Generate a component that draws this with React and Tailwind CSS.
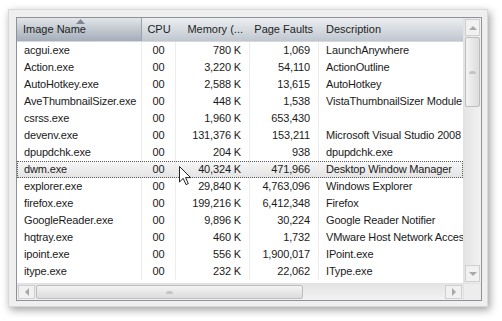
const rows = [
  ['acgui.exe', '00', '780 K', '1,069', 'LaunchAnywhere'],
  ['Action.exe', '00', '3,220 K', '54,110', 'ActionOutline'],
  ['AutoHotkey.exe', '00', '2,588 K', '13,615', 'AutoHotkey'],
  ['AveThumbnailSizer.exe', '00', '448 K', '1,538', 'VistaThumbnailSizer Module'],
  ['csrss.exe', '00', '1,960 K', '653,430', ''],
  ['devenv.exe', '00', '131,376 K', '153,211', 'Microsoft Visual Studio 2008'],
  ['dpupdchk.exe', '00', '204 K', '938', 'dpupdchk.exe'],
  ['dwm.exe', '00', '40,324 K', '471,966', 'Desktop Window Manager'],
  ['explorer.exe', '00', '29,840 K', '4,763,096', 'Windows Explorer'],
  ['firefox.exe', '00', '199,216 K', '6,412,348', 'Firefox'],
  ['GoogleReader.exe', '00', '9,896 K', '30,224', 'Google Reader Notifier'],
  ['hqtray.exe', '00', '460 K', '1,732', 'VMware Host Network Access'],
  ['ipoint.exe', '00', '556 K', '1,900,017', 'IPoint.exe'],
  ['itype.exe', '00', '232 K', '22,062', 'IType.exe'],
]

function Arrow({ dir }) {
  const pts = {
    up: '0,4 4,0 8,4',
    down: '0,0 8,0 4,4',
    left: '4,0 4,8 0,4',
    right: '0,0 0,8 4,4',
  }[dir]
  const vertical = dir === 'up' || dir === 'down'
  return (
    <svg width={vertical ? 8 : 4} height={vertical ? 4 : 8} viewBox={vertical ? '0 0 8 4' : '0 0 4 8'}>
      <polygon points={pts} fill="#a8a8a8" />
    </svg>
  )
}

function Row({ r, selected }) {
  return (
    <div
      className={
        'flex h-[17px] items-center text-[#1a1a1a] tracking-[-0.15px] ' +
        (selected
          ? 'bg-[linear-gradient(#f7f7f7,#e3e3e3)] outline outline-1 outline-dotted outline-[#5a5a5a] -outline-offset-1'
          : '')
      }
    >
      <div className="w-[125px] shrink-0 pl-[7px] truncate border-r border-[#ececec] h-full leading-[17px]">{r[0]}</div>
      <div className="w-[34px] shrink-0 text-center border-r border-[#ececec] h-full leading-[17px]">{r[1]}</div>
      <div className="w-[74px] shrink-0 text-right pr-[8px] border-r border-[#ececec] h-full leading-[17px]">{r[2]}</div>
      <div className="w-[69px] shrink-0 text-right pr-[8px] border-r border-[#ececec] h-full leading-[17px]">{r[3]}</div>
      <div className="w-[200px] shrink-0 pl-[7px] whitespace-nowrap h-full leading-[17px]">{r[4]}</div>
    </div>
  )
}

export default function App() {
  return (
    <div className="relative w-[502px] h-[321px] bg-white pt-[9px] pl-[8px] font-['Liberation_Sans',Arial,sans-serif] text-[11px]">
      <div className="w-[480px] h-[298px] bg-[#efefef] border border-[#d8d8d8] shadow-[2px_3px_8px_rgba(0,0,0,0.38)] pt-[7px] pl-[7px]">
        {/* list view */}
        <div className="w-[466px] h-[284px] border border-[#8e9196] bg-white flex flex-col">
          <div className="flex h-[265px]">
            <div className="w-[446px] overflow-hidden flex flex-col">
              {/* header */}
              <div className="flex h-[24px] shrink-0 text-[#1e1e1e] border-b border-[#d5d9de]">
                <div className="relative w-[125px] shrink-0 pl-[6px] flex items-center bg-[linear-gradient(#e2e6ea,#c1c8d0_50%,#a4aeb9)] border-r border-[#9aa3ad]">
                  <svg className="absolute left-[59px] top-[1px]" width="9" height="5" viewBox="0 0 9 5">
                    <polygon points="0,5 4.5,0 9,5" fill="#7c8794" />
                  </svg>
                  Image Name
                </div>
                <div className="w-[34px] shrink-0 flex items-center justify-center bg-[linear-gradient(#eceef1,#d6dbe0_50%,#bfc6ce)]">CPU</div>
                <div className="w-[74px] shrink-0 flex items-center justify-end pr-[7px] bg-[linear-gradient(#eceef1,#d6dbe0_50%,#bfc6ce)]">Memory (...</div>
                <div className="w-[69px] shrink-0 flex items-center justify-end pr-[6px] bg-[linear-gradient(#eceef1,#d6dbe0_50%,#bfc6ce)]">Page Faults</div>
                <div className="flex-1 flex items-center pl-[7px] bg-[linear-gradient(#eceef1,#d6dbe0_50%,#bfc6ce)]">Description</div>
              </div>
              {/* rows */}
              <div className="h-[241px] overflow-hidden">
                {rows.map((r, i) => (
                  <Row key={r[0]} r={r} selected={i === 7} />
                ))}
              </div>
            </div>
            {/* vertical scrollbar */}
            <div className="w-[18px] flex flex-col bg-[linear-gradient(to_right,#e4e4e4,#f2f2f2)] border-l border-[#e2e2e2]">
              <div className="h-[17px] m-[1px] border border-[#cfcfcf] bg-[#f1f1f1] flex items-center justify-center">
                <Arrow dir="up" />
              </div>
              <div className="h-[70px] mx-[1px] border border-[#bdbdbd] rounded-[2px] bg-[linear-gradient(to_right,#f3f3f3,#dcdcdc)] flex items-center justify-center">
                <div className="w-[7px] h-[3px] rounded-t-full bg-[#c4c4c4]" />
              </div>
              <div className="flex-1" />
              <div className="h-[17px] m-[1px] border border-[#cfcfcf] bg-[#f1f1f1] flex items-center justify-center">
                <Arrow dir="down" />
              </div>
            </div>
          </div>
          {/* horizontal scrollbar */}
          <div className="flex h-[17px] border-t border-[#e2e2e2]">
            <div className="w-[446px] flex bg-[linear-gradient(#e4e4e4,#f2f2f2)]">
              <div className="w-[17px] m-[1px] border border-[#cfcfcf] bg-[#f1f1f1] flex items-center justify-center">
                <Arrow dir="left" />
              </div>
              <div className="w-[267px] my-[1px] border border-[#bdbdbd] rounded-[2px] bg-[linear-gradient(#f3f3f3,#dcdcdc)] flex items-center justify-center">
                <div className="w-[7px] h-[3px] rounded-t-full bg-[#c4c4c4]" />
              </div>
              <div className="flex-1" />
              <div className="w-[17px] m-[1px] border border-[#cfcfcf] bg-[#f1f1f1] flex items-center justify-center">
                <Arrow dir="right" />
              </div>
            </div>
            <div className="w-[18px] bg-[#ededed] border-l border-[#e2e2e2]" />
          </div>
        </div>
      </div>
      {/* mouse pointer */}
      <svg className="absolute left-[179px] top-[166px]" width="13" height="20" viewBox="0 0 13 20">
        <path d="M0.5 0.5 L0.5 16 L4.2 12.4 L7 18.6 L9.3 17.6 L6.6 11.6 L11.6 11.6 Z" fill="#fff" stroke="#222" strokeWidth="1" strokeLinejoin="round" />
      </svg>
    </div>
  )
}
